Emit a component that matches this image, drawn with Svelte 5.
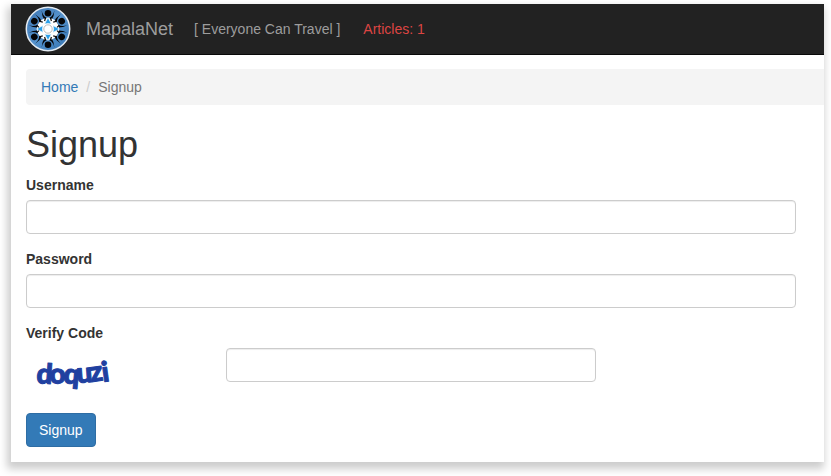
<script lang="ts">
	interface Glyph {
		char: string;
		x: number;
		y: number;
		tilt: number;
	}

	let username = $state('');
	let password = $state('');
	let code = $state('');

	const captcha: Glyph[] = [
		{ char: 'd', x: 10, y: 35, tilt: 4 },
		{ char: 'o', x: 24, y: 36, tilt: -4 },
		{ char: 'q', x: 37, y: 35, tilt: 5 },
		{ char: 'u', x: 51, y: 35, tilt: -4 },
		{ char: 'z', x: 65, y: 34, tilt: -8 },
		{ char: 'i', x: 77, y: 34, tilt: -8 }
	];

	const people = [0, 60, 120, 180, 240, 300];
	const arrows = [0, 90, 180, 270];
</script>

<div class="page">
	<header class="navbar">
		<a class="logo" href="/" aria-label="MapalaNet home">
			<svg viewBox="0 0 46 46" width="46" height="46" aria-hidden="true">
				<defs>
					<linearGradient id="ring" x1="0" y1="0" x2="1" y2="1">
						<stop offset="0" stop-color="#3d76b4" />
						<stop offset="0.5" stop-color="#5592cc" />
						<stop offset="1" stop-color="#3474b2" />
					</linearGradient>
				</defs>
				<circle cx="23" cy="23" r="21.7" fill="url(#ring)" stroke="#e4ebf2" stroke-width="1.5" />
				{#each people as angle}
					<g transform="rotate({angle} 23 23)">
						<circle cx="23" cy="7.2" r="3.3" fill="#050608" />
						<path
							d="M16.6 4.5 Q17.8 9.8 21.5 12 H24.5 Q28.2 9.8 29.4 4.5 Q29.2 10 26.5 14 H19.5 Q16.8 10 16.6 4.5Z"
							fill="#050608"
						/>
					</g>
				{/each}
				<circle cx="23" cy="23" r="11" fill="#fff" />
				{#each people as angle}
					<path d="M20.6 11.6 L19.6 15 M25.4 11.6 L26.4 15" stroke="#050608" stroke-width="1.2" transform="rotate({angle} 23 23)" />
				{/each}
				{#each arrows as angle}
					<path
						d="M23 11.5 L26.4 18 Q23 16.8 19.6 18Z"
						fill="#2b9fe8"
						stroke="#fff"
						stroke-width="0.6"
						transform="rotate({angle} 23 23)"
					/>
				{/each}
				<circle cx="23" cy="23" r="4.2" fill="#fff" stroke="#aaa" stroke-width="0.8" />
			</svg>
		</a>
		<a class="brand" href="/">MapalaNet</a>
		<nav class="links">
			<a href="/">[ Everyone Can Travel ]</a>
			<a class="articles" href="/articles">Articles: 1</a>
		</nav>
	</header>

	<main class="content">
		<nav class="breadcrumb" aria-label="Breadcrumb">
			<a href="/">Home</a>
			<span class="divider">/</span>
			<span class="current">Signup</span>
		</nav>

		<h1>Signup</h1>

		<form onsubmit={(e) => e.preventDefault()}>
			<div class="group">
				<label for="username">Username</label>
				<input id="username" type="text" bind:value={username} />
			</div>
			<div class="group">
				<label for="password">Password</label>
				<input id="password" type="password" bind:value={password} />
			</div>
			<div class="group">
				<label for="code">Verify Code</label>
				<div class="verify">
					<svg class="captcha" viewBox="0 0 120 50" width="120" height="50" role="img" aria-label="doquzi">
						{#each captcha as { char, x, y, tilt }}
							<text {x} {y} transform="rotate({tilt} {x} {y})">{char}</text>
						{/each}
					</svg>
					<input id="code" type="text" bind:value={code} />
				</div>
			</div>
			<button type="submit">Signup</button>
		</form>
	</main>
</div>

<style>
	:global(body) {
		margin: 0;
		background: #fff;
	}

	.page {
		margin: 4px 7px 14px 11px;
		background: #fff;
		box-shadow: -2px 5px 8px 2px rgba(0, 0, 0, 0.2);
		color: #333;
		font: 14px/20px 'Liberation Sans', Arial, sans-serif;
	}

	.page * {
		box-sizing: border-box;
	}

	a {
		color: #337ab7;
		text-decoration: none;
	}

	.navbar {
		display: flex;
		align-items: center;
		padding: 0 14px;
		height: 51px;
		background: #222;
		border-bottom: 1px solid #080808;
	}

	.logo {
		display: flex;
	}

	.brand {
		margin: 0 21px 0 15px;
		color: #9d9d9d;
		font-size: 18px;
	}

	.links {
		display: flex;
		gap: 23px;
	}

	.links a {
		color: #9d9d9d;
	}

	.links .articles {
		color: #dc4542;
	}

	.content {
		padding: 14px 0 15px 15px;
	}

	.breadcrumb {
		display: flex;
		padding: 8px 15px;
		background: #f4f4f4;
		border-radius: 4px 0 0 4px;
	}

	.divider {
		padding: 0 8px;
		color: #ccc;
	}

	.current {
		color: #777;
	}

	h1 {
		margin: 20px 0 10px;
		font-size: 36px;
		font-weight: 500;
		line-height: 40px;
	}

	form {
		padding-right: 28px;
	}

	.group {
		margin-bottom: 15px;
	}

	label {
		display: block;
		margin-bottom: 5px;
		font-weight: 700;
	}

	input {
		display: block;
		width: 100%;
		height: 34px;
		padding: 6px 12px;
		border: 1px solid #ccc;
		border-radius: 4px;
		background: #fff;
		box-shadow: inset 0 1px 1px rgba(0, 0, 0, 0.075);
		color: #555;
		font: inherit;
	}

	.verify {
		display: grid;
		grid-template-columns: 200px 48%;
		align-items: start;
	}

	.captcha {
		display: block;
	}

	.captcha text {
		fill: #2040a0;
		stroke: #2040a0;
		stroke-width: 1px;
		stroke-linejoin: round;
		font: 900 28px Lato, sans-serif;
	}

	button {
		display: block;
		padding: 6px 12px;
		border: 1px solid #2e6da4;
		border-radius: 4px;
		background: #337ab7;
		color: #fff;
		font: inherit;
		cursor: pointer;
	}
</style>
